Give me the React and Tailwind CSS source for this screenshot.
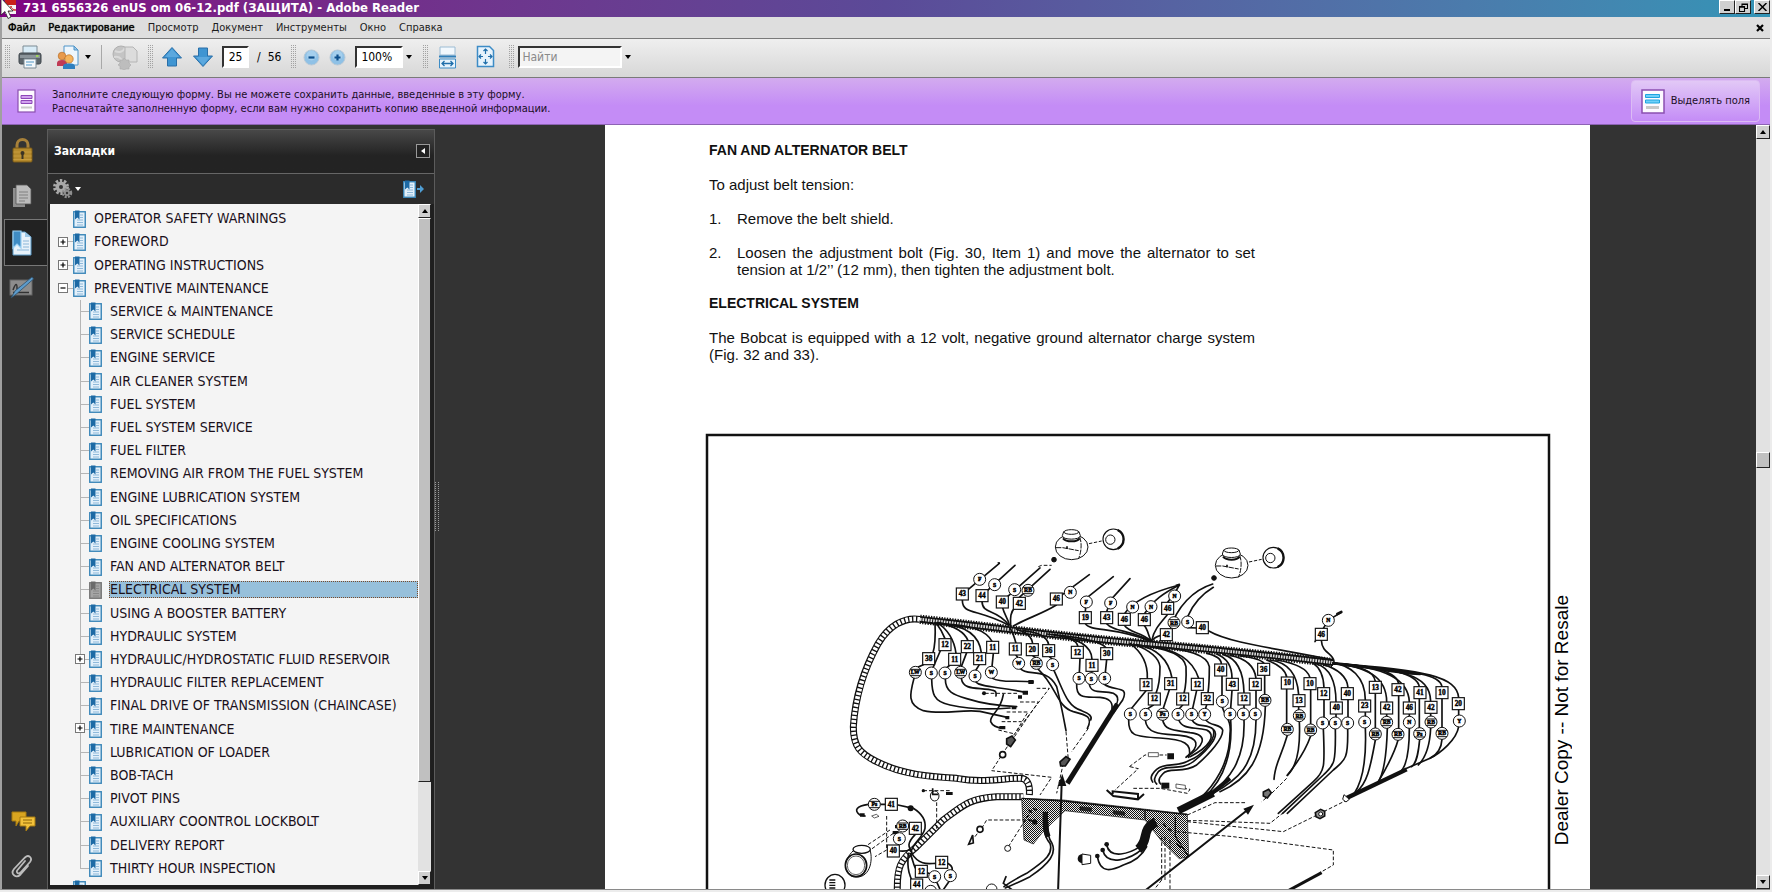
import React from "react";

const UI = "font-['DejaVu_Sans_Condensed','DejaVu_Sans',sans-serif]";

/* ---------- small shared pieces ---------- */

function Caret({ label, className = "" }) {
  return (
    <button aria-label={label} className={"flex h-6 w-3 items-center justify-center " + className}>
      <svg width="6" height="4" viewBox="0 0 6 4" aria-hidden="true">
        <path d="M0 0h6L3 4z" fill="currentColor" />
      </svg>
    </button>
  );
}

function Grip({ className = "" }) {
  return (
    <svg className={"shrink-0 " + className} width="5" height="24" viewBox="0 0 5 24" aria-hidden="true">
      <path d="M0.500 0v24M2.500 0v24M4.500 0v24" stroke="#a2a2a2" strokeWidth="1" strokeDasharray="1 1" />
    </svg>
  );
}

function ToolButton({ label, className = "", children }) {
  return (
    <button aria-label={label} className={"flex shrink-0 items-center justify-center " + className}>
      {children}
    </button>
  );
}

function BookmarkIcon({ gray = false }) {
  const edge = gray ? "#777" : "#3a86b8";
  const tab = gray ? "#6b6b6b" : "#1d6aa5";
  return (
    <svg className="shrink-0" width="13" height="18" viewBox="0 0 13 18" aria-hidden="true">
      <rect x="0.75" y="1.75" width="11.5" height="15.5" fill={gray ? "#a5a5a5" : "#e3f0fa"} stroke={edge} strokeWidth="1.4" />
      <path d="M7 5h3M7 7.500h3M4 10h6M4 12.500h6M4 15h6" stroke={gray ? "#888" : "#8fb9da"} strokeWidth="1" />
      <path d="M2 0.500h4.500v9L4.300 7.500 2 9.500z" fill={tab} />
    </svg>
  );
}

/* ---------- title bar, menu, toolbar ---------- */

function TitleBar() {
  const box = "flex h-[14px] w-4 items-center justify-center border border-t-white border-l-white border-r-[#222] border-b-[#222] bg-[#d0d0d0]";
  return (
    <header className="relative flex h-[17px] shrink-0 items-start bg-linear-to-r from-[#800080] via-[#5b4a98] to-[#3394b6] pl-1 text-white">
      <svg className="shrink-0" width="13" height="16" viewBox="0 0 13 16" aria-hidden="true">
        <path d="M1 0h11v14H1z" fill="#f4f4f4" />
        <path d="M1 0h11v5H1z" fill="#c8201c" />
        <path d="M3 12c3-1 4-4 4-6 0 2 2 4 5 4-4 0-7 1-9 2z" fill="none" stroke="#d8302a" strokeWidth="1" />
      </svg>
      <svg className="absolute top-0 left-0" width="14" height="20" viewBox="0 0 14 20" aria-hidden="true">
        <path d="M1-2v17l4-3.500 3 7 3-1.500-3-6h5z" fill="#fff" stroke="#222" strokeWidth="0.8" />
      </svg>
      <h1 className="ml-[6px] grow text-[13px] leading-[15px] font-bold">731 6556326 enUS om 06-12.pdf (ЗАЩИТА) - Adobe Reader</h1>
      <div className="flex">
        <button aria-label="Свернуть" className={box}>
          <svg width="8" height="8" viewBox="0 0 8 8"><path d="M1 6h6v2H1z" fill="#000" /></svg>
        </button>
        <button aria-label="Восстановить" className={box}>
          <svg width="9" height="9" viewBox="0 0 9 9">
            <path d="M3 3V1h5.500v4.500H6M0.500 3.500h5v5h-5zM3 1.500h5.500M0.500 4.200h5" fill="none" stroke="#000" strokeWidth="1.100" />
          </svg>
        </button>
        <button aria-label="Закрыть" className={box + " ml-[3px]"}>
          <svg width="9" height="8" viewBox="0 0 9 8"><path d="M0.500 0l8 8M8.500 0l-8 8" stroke="#000" strokeWidth="1.500" /></svg>
        </button>
      </div>
    </header>
  );
}

function MenuBar() {
  const items = ["Файл", "Редактирование", "Просмотр", "Документ", "Инструменты", "Окно", "Справка"];
  return (
    <nav aria-label="Меню" className="flex h-[22px] shrink-0 items-center gap-[13px] border-b border-[#7a7a7a] bg-[#dedede] pr-[6px] pl-[6px] text-[11px] leading-4 text-[#1c1c1c]">
      {items.map((t, i) => (
        <button key={t} className={i < 2 ? "text-black [text-shadow:0_0_1px_#000]" : ""}>{t}</button>
      ))}
      <button aria-label="Закрыть документ" className="ml-auto">
        <svg width="8" height="8" viewBox="0 0 8 8"><path d="M1 1l6 6M7 1L1 7" stroke="#000" strokeWidth="2.200" /></svg>
      </button>
    </nav>
  );
}

function ArrowIcon({ down = false }) {
  return (
    <svg width="22" height="22" viewBox="0 0 22 22" aria-hidden="true" className={down ? "rotate-180" : ""}>
      <path d="M11 1.500L20.500 12H15.500v8H6.500v-8H1.500z" fill="#3f95d2" stroke="#2a6fa8" strokeWidth="1" strokeLinejoin="round" />
      <path d="M11 3L18 11H4z" fill="#6fb6e6" opacity="0.600" />
    </svg>
  );
}

function ZoomIcon({ plus = false }) {
  return (
    <svg width="17" height="17" viewBox="0 0 17 17" aria-hidden="true">
      <circle cx="8.500" cy="8.500" r="7.500" fill="#8fc1e6" stroke="#b9c9d6" strokeWidth="1" />
      <circle cx="8.500" cy="6.500" r="5" fill="#aed4f0" opacity="0.700" />
      <path d={plus ? "M5.500 8.500h6M8.500 5.500v6" : "M5.500 8.500h6"} stroke="#0d4f8c" strokeWidth="2.200" />
    </svg>
  );
}

function Toolbar() {
  const field = "h-[22px] rounded-none border-2 border-t-[#333] border-l-[#333] border-r-white border-b-white text-[12px] text-black outline-none";
  return (
    <div className="flex h-[39px] shrink-0 items-center border-b border-[#7a7a7a] bg-linear-to-b from-[#efefef] to-[#d7d7d7] pb-[2px] pl-[3px] text-black">
      <Grip />
      <ToolButton label="Печать" className="ml-2">
        <svg width="24" height="24" viewBox="0 0 24 24" aria-hidden="true">
          <path d="M5 1h14v9H5z" fill="#d9ecf7" stroke="#7d8b94" />
          <rect x="1" y="8" width="22" height="11" rx="2" fill="#5c646a" stroke="#3f474d" />
          <path d="M2 10h20v3H2z" fill="#8b949a" />
          <rect x="18" y="10" width="2.500" height="2" fill="#9fd45a" />
          <path d="M6 14h12v9H6z" fill="#f4f8fb" stroke="#7d8b94" />
          <path d="M8 17h8M8 20h6" stroke="#86b6d8" strokeWidth="1.500" />
        </svg>
      </ToolButton>
      <ToolButton label="Совместная работа" className="ml-[14px]">
        <svg width="24" height="25" viewBox="0 0 24 25" aria-hidden="true">
          <path d="M8 1h10l4 4v15H8z" fill="#eef6fc" stroke="#4e94c8" />
          <path d="M18 1v4h4z" fill="#9cc8e8" stroke="#4e94c8" />
          <circle cx="6" cy="11" r="3.800" fill="#e89a4c" stroke="#b96f27" strokeWidth="0.700" />
          <path d="M1 21v-3c0-2 2-3 5-3s5 1 5 3v3z" fill="#c03a55" />
          <circle cx="13" cy="14" r="4.200" fill="#f5b45c" stroke="#b96f27" strokeWidth="0.700" />
          <path d="M7 24v-2.500c0-2.500 2.500-3 6-3s6 .5 6 3V24z" fill="#2d7fc0" />
        </svg>
      </ToolButton>
      <Caret label="Меню совместной работы" className="ml-[2px]" />
      <span className="ml-[7px] h-6 w-px bg-[#a8a8a8]" />
      <ToolButton label="Веб-инструменты" className="ml-[9px]">
        <svg width="27" height="25" viewBox="0 0 27 25" aria-hidden="true">
          <circle cx="10" cy="9" r="8" fill="#c4c4c4" stroke="#b0b0b0" />
          <path d="M4 6c4 2 8 1 10-3M3 12c4-1 7 1 8 4" stroke="#dadada" strokeWidth="2" fill="none" />
          <path d="M14 2h8l4 4v11H14z" fill="#dcdcdc" stroke="#b4b4b4" />
          <path d="M13 13l2 2h3v3l2 2-2 2v2h-3l-2 1-2-1H9v-3l-2-1 2-2v-3h3z" fill="#bdbdbd" stroke="#ababab" strokeWidth="0.600" />
        </svg>
      </ToolButton>
      <Grip className="ml-[10px]" />
      <ToolButton label="Предыдущая страница" className="ml-2"><ArrowIcon /></ToolButton>
      <ToolButton label="Следующая страница" className="ml-[9px]"><ArrowIcon down /></ToolButton>
      <input aria-label="Номер страницы" defaultValue="25" className={field + " ml-2 w-[27px] bg-white text-center"} />
      <span className="ml-2 flex gap-[7px] text-[12px]"><span>/</span><span>56</span></span>
      <Grip className="ml-[10px]" />
      <ToolButton label="Уменьшить" className="ml-[7px]"><ZoomIcon /></ToolButton>
      <ToolButton label="Увеличить" className="ml-[9px]"><ZoomIcon plus /></ToolButton>
      <input aria-label="Масштаб" defaultValue="100%" className={field + " ml-[9px] w-12 bg-white pl-[4px]"} />
      <Caret label="Выбрать масштаб" />
      <Grip className="ml-2" />
      <ToolButton label="По ширине" className="ml-[10px]">
        <svg width="19" height="23" viewBox="0 0 19 23" aria-hidden="true">
          <path d="M2 1h15v8H2z" fill="#f2f8fd" stroke="#9cbcd4" />
          <path d="M1 10.500h17" stroke="#2f7fba" strokeWidth="2" />
          <path d="M1.500 13h16v9h-16z" fill="#e7f3fc" stroke="#3d8cc6" />
          <path d="M4 17.500h11M6.500 15L4 17.500 6.500 20M12.500 15l2.500 2.500-2.500 2.500" fill="none" stroke="#1f6eaa" strokeWidth="1.300" />
        </svg>
      </ToolButton>
      <ToolButton label="Страница целиком" className="ml-[19px]">
        <svg width="19" height="24" viewBox="0 0 19 24" aria-hidden="true">
          <path d="M1.500 1.500h12l4 4v16h-16z" fill="#e7f3fc" stroke="#3d8cc6" strokeWidth="1.500" />
          <path d="M9.500 4v5M7.500 6l2-2 2 2M9.500 14v5M7.500 17l2 2 2-2M3 11.500h4M5 9.500l-2 2 2 2M12 11.500h4M14 9.500l2 2-2 2" fill="none" stroke="#1f6eaa" strokeWidth="1.200" />
        </svg>
      </ToolButton>
      <Grip className="ml-[14px]" />
      <input aria-label="Найти" placeholder="Найти" className={field + " ml-1 w-[104px] bg-[#f4f4f4] pl-[2px] placeholder:text-[#8a8a8a]"} />
      <Caret label="Параметры поиска" />
    </div>
  );
}

function MessageBar() {
  return (
    <section className="flex h-[47px] shrink-0 items-center border-b border-[#8d63b4] bg-linear-to-b from-[#d3abef] to-[#c48cf6] to-60% pr-[10px] pl-[15px] text-[#1b0f26]">
      <svg className="shrink-0" width="19" height="24" viewBox="0 0 19 24" aria-hidden="true">
        <rect x="1" y="1" width="17" height="22" fill="#fdfaff" stroke="#8a4fb0" strokeWidth="1.200" />
        <path d="M4 6.500h11v3H4zM4 11.500h11v3H4z" fill="#d0a0ee" stroke="#8d46b8" />
        <path d="M4 18.500h11" stroke="#c9c9c9" strokeWidth="2" />
      </svg>
      <p className="ml-4 pt-px text-[11px] leading-[14px]">
        Заполните следующую форму. Вы не можете сохранить данные, введенные в эту форму.
        <br />
        Распечатайте заполненную форму, если вам нужно сохранить копию введенной информации.
      </p>
      <button className="ml-auto flex h-[42px] items-center gap-[6px] rounded border border-[#dcbcf4] bg-linear-to-b from-[#e2c8f6] to-[#c48cf6] px-[9px] text-[11px] whitespace-nowrap">
        <svg width="24" height="25" viewBox="0 0 24 25" aria-hidden="true">
          <rect x="1" y="1" width="22" height="23" fill="#fdfaff" stroke="#8a4fb0" strokeWidth="1.500" />
          <path d="M4.500 5.500h14v3h-14zM4.500 11h14v3h-14z" fill="#6fd0f8" stroke="#1ea4e0" />
          <path d="M5 17h13v3H5z" fill="#c9c9c9" />
        </svg>
        Выделять поля
      </button>
    </section>
  );
}

/* ---------- navigation pane ---------- */

function NavStrip() {
  return (
    <nav aria-label="Панели" className="flex w-[45px] shrink-0 flex-col bg-[#333]">
      <button aria-label="Защита" className="ml-[9px] mt-3 h-[27px] w-[24px]">
        <svg width="24" height="27" viewBox="0 0 24 27" aria-hidden="true">
          <path d="M6 12V8a5.500 5.500 0 0 1 11 0v4" fill="none" stroke="#a8813a" strokeWidth="3" />
          <rect x="2" y="11" width="19" height="14" rx="1" fill="#b58a2c" stroke="#7b5b18" />
          <path d="M2.500 15h18M2.500 19h18M2.500 22.500h18" stroke="#c79c3e" strokeWidth="1" />
          <circle cx="11.500" cy="16" r="2" fill="#3b3324" /><path d="M10.500 16h2v6h-2z" fill="#3b3324" />
        </svg>
      </button>
      <button aria-label="Страницы" className="ml-[9px] mt-5 h-[24px] w-[24px]">
        <svg width="24" height="24" viewBox="0 0 24 24" aria-hidden="true">
          <path d="M2 4h12v19H2z" fill="#8e8e8e" />
          <path d="M5 1h11l4 4v15H5z" fill="#bcbcbc" stroke="#555" strokeWidth="0.800" />
          <path d="M8 8h9M8 11h9M8 14h9M8 17h6" stroke="#808080" />
        </svg>
      </button>
      <div className="mt-[11px] ml-[2px] flex h-[47px] items-center border-y border-l border-[#777] bg-[#222] pl-[6px]">
        <button aria-label="Закладки">
          <svg width="22" height="26" viewBox="0 0 22 26" aria-hidden="true">
            <path d="M2 2h12l6 5v18H2z" fill="#e8f2fa" stroke="#5a9bc9" />
            <path d="M14 2v5h6z" fill="#9cc7e6" />
            <path d="M12 11h6M12 14h6M12 17h6M6 20h12" stroke="#8ab6d8" />
            <path d="M2 1h8v17l-4-4-4 4z" fill="#3f8cc4" stroke="#9cd0f2" strokeWidth="1.200" />
          </svg>
        </button>
      </div>
      <button aria-label="Подписи" className="mt-[10px] ml-[7px] h-6 w-[26px]">
        <svg width="26" height="24" viewBox="0 0 26 24" aria-hidden="true">
          <rect x="1" y="4" width="22" height="15" fill="#8d8d8d" stroke="#666" />
          <path d="M4 14c3-8 4-6 4-2s2 0 3-1M4 16.500h16" stroke="#333" strokeWidth="1.500" fill="none" />
          <path d="M2 22l4-7L23 1l1.500 2L8 17.500z" fill="#5d9ccc" stroke="#2e516c" strokeWidth="0.800" />
        </svg>
      </button>
      <button aria-label="Комментарии" className="mt-auto ml-2 h-5 w-[26px]">
        <svg width="26" height="20" viewBox="0 0 26 20" aria-hidden="true">
          <path d="M2 1h14v9h-7l-3 5v-5H2z" fill="#d9a520" stroke="#a67a10" strokeLinejoin="round" />
          <path d="M10 6h15v9h-5l-4 5v-5h-6z" fill="#f2c13a" stroke="#a67a10" strokeLinejoin="round" />
          <path d="M13 9h9M13 12h9" stroke="#8c6408" />
        </svg>
      </button>
      <button aria-label="Вложения" className="mt-[22px] mb-[10px] ml-[8px] h-[26px] w-6">
        <svg width="24" height="26" viewBox="0 0 24 26" aria-hidden="true">
          <path d="M15 8L7.500 17c-2 2.500 1 4.500 3 2.500L20 9c3-4-1.500-8-5-4.500L4 16c-4 5 2 10 6.500 5.500L18 13" fill="none" stroke="#bdbdbd" strokeWidth="1.800" strokeLinecap="round" />
        </svg>
      </button>
    </nav>
  );
}

const roots = [
  { t: "OPERATOR SAFETY WARNINGS", x: "" },
  { t: "FOREWORD", x: "+" },
  { t: "OPERATING INSTRUCTIONS", x: "+" },
  { t: "PREVENTIVE MAINTENANCE", x: "-" },
];

const children = [
  "SERVICE & MAINTENANCE", "SERVICE SCHEDULE", "ENGINE SERVICE", "AIR CLEANER SYSTEM", "FUEL SYSTEM",
  "FUEL SYSTEM SERVICE", "FUEL FILTER", "REMOVING AIR FROM THE FUEL SYSTEM", "ENGINE LUBRICATION SYSTEM",
  "OIL SPECIFICATIONS", "ENGINE COOLING SYSTEM", "FAN AND ALTERNATOR BELT", "ELECTRICAL SYSTEM",
  "USING A BOOSTER BATTERY", "HYDRAULIC SYSTEM", "HYDRAULIC/HYDROSTATIC FLUID RESERVOIR",
  "HYDRAULIC FILTER REPLACEMENT", "FINAL DRIVE OF TRANSMISSION (CHAINCASE)", "TIRE MAINTENANCE",
  "LUBRICATION OF LOADER", "BOB-TACH", "PIVOT PINS", "AUXILIARY COONTROL LOCKBOLT", "DELIVERY REPORT",
  "THIRTY HOUR INSPECTION",
];
const expandable = ["HYDRAULIC/HYDROSTATIC FLUID RESERVOIR", "TIRE MAINTENANCE"];

function Expander({ minus = false, className = "" }) {
  return (
    <button aria-label={minus ? "Свернуть" : "Развернуть"} className={"h-[10px] w-[10px] " + className}>
      <svg className="block" width="10" height="10" viewBox="0 0 10 10">
        <rect x="0.500" y="0.500" width="9" height="9" fill="#fff" stroke="#777" />
        <path d={minus ? "M2.500 5h5" : "M2.500 5h5M5 2.500v5"} stroke="#000" strokeWidth="1.200" />
      </svg>
    </button>
  );
}

function ScrollButton({ up = false, label }) {
  return (
    <button aria-label={label} className="flex h-[14px] w-full shrink-0 items-center justify-center border border-t-white border-l-white border-r-[#222] border-b-[#222] bg-[#cfcfcf]">
      <svg width="6" height="4" viewBox="0 0 6 4"><path d={up ? "M0 4h6L3 0z" : "M0 0h6L3 4z"} fill="#000" /></svg>
    </button>
  );
}

const dither = "bg-[#e2e2e2]";
const thumb = "w-full shrink-0 border border-t-white border-l-white border-r-[#222] border-b-[#222] bg-[#c0c0c0]";

function BookmarksPanel() {
  return (
    <aside className="mt-1 flex w-[388px] shrink-0 flex-col border-x border-t border-[#5c5c5c] bg-[#1f1f1f]">
      <div className="flex h-[44px] shrink-0 items-center justify-between border-b border-[#666] bg-linear-to-b from-[#484848] to-[#232323] to-60% pr-1 pb-[2px] pl-[6px] text-white">
        <h2 className="text-[12px] font-bold">Закладки</h2>
        <button aria-label="Свернуть панель" className="flex h-[14px] w-[14px] items-center justify-center border border-[#999] bg-[#222]">
          <svg width="4" height="6" viewBox="0 0 4 6"><path d="M4 0v6L0 3z" fill="#fff" /></svg>
        </button>
      </div>
      <div className="flex h-[30px] shrink-0 items-center justify-between bg-[#2b2b2b] pr-[10px] pl-[5px] text-white">
        <div className="flex items-center">
          <svg width="20" height="20" viewBox="0 0 20 20" aria-hidden="true">
            <circle cx="8" cy="8" r="6.500" fill="none" stroke="#a8a8a8" strokeWidth="3" strokeDasharray="2.400 1.700" />
            <circle cx="8" cy="8" r="5.500" fill="#a8a8a8" />
            <circle cx="8" cy="8" r="2" fill="#333" />
            <circle cx="14" cy="14" r="4" fill="none" stroke="#8f8f8f" strokeWidth="2.500" strokeDasharray="2 1.200" />
            <circle cx="14" cy="14" r="3" fill="#8f8f8f" /><circle cx="14" cy="14" r="1.200" fill="#333" />
          </svg>
          <Caret label="Параметры" className="-ml-px" />
        </div>
        <button aria-label="Развернуть текущую закладку" className="flex items-center">
          <BookmarkIcon />
          <svg width="8" height="10" viewBox="0 0 8 10"><path d="M1 4h3V1l4 4-4 4V6H1z" fill="#4f9ed4" /></svg>
        </button>
      </div>
      <div className="mr-[3px] mb-1 ml-[2px] flex min-h-0 grow">
        <div className="flex min-w-0 grow flex-col overflow-hidden bg-[#f4f4f4] pt-[3px] text-[14px] leading-[17px] text-[#1a101a]">
          <ul className="flex min-h-0 grow flex-col">
            {roots.map((r) => (
              <li key={r.t} className="flex min-h-0 flex-1 items-center pl-2">
                {r.x ? <Expander minus={r.x === "-"} /> : <span className="w-[10px]" />}
                <span className={r.x ? "h-px w-[5px] bg-[#b5b5b5]" : "w-[5px]"} />
                <BookmarkIcon />
                <button className="ml-2 whitespace-nowrap">{r.t}</button>
              </li>
            ))}
            {children.map((t, i) => {
              const on = t === "ELECTRICAL SYSTEM";
              return (
                <li key={t} className="flex min-h-0 flex-1 items-center pl-[30px]">
                  <span className="relative flex w-[9px] shrink-0 flex-col self-stretch">
                    <span className="flex-1 border-b border-l border-[#b5b5b5]" />
                    <span className={"flex-1 " + (i < children.length - 1 ? "border-l border-[#b5b5b5]" : "")} />
                    {expandable.includes(t) && <Expander className="absolute top-[6px] -left-[5px]" />}
                  </span>
                  <BookmarkIcon gray={on} />
                  <button
                    className={
                      "ml-[7px] pl-px text-left whitespace-nowrap " +
                      (on ? "grow bg-[#97c0db] outline-1 -outline-offset-1 outline-dotted outline-[#7a4a2a]" : "")
                    }
                  >
                    {t}
                  </button>
                </li>
              );
            })}
          </ul>
          <div className="h-[5px] shrink-0 overflow-hidden pl-[23px]"><BookmarkIcon /></div>
        </div>
        <div className={"flex w-[13px] shrink-0 flex-col " + dither}>
          <ScrollButton up label="Вверх" />
          <div className={"grow-[563] " + thumb} />
          <div className="grow-[89]" />
          <ScrollButton label="Вниз" />
        </div>
      </div>
    </aside>
  );
}

/* ---------- wiring diagram ---------- */

function Tags({ boxes, circles }) {
  return (
    <g fontFamily="Liberation Serif, serif" fontWeight="bold" textAnchor="middle">
      {boxes.map(([x, y, t]) => (
        <g key={"b" + x + "-" + y}>
          <rect x={x - 18} y={y - 18} width="36" height="36" fill="#fff" stroke="#111" strokeWidth="3.500" />
          <text x={x} y={y + 7} fontSize="22" stroke="#000" strokeWidth="1.200">{t}</text>
        </g>
      ))}
      {circles.map(([x, y, t]) => (
        <g key={"c" + x + "-" + y}>
          <circle cx={x} cy={y} r="18" fill="#fff" stroke="#111" strokeWidth="3" />
          {t.length > 1 && <path d={`M${x - 15} ${y - 9}h30M${x - 15} ${y + 10}h30`} stroke="#111" strokeWidth="3" />}
          {t && <text x={x} y={y + 6} fontSize="17" stroke="#000" strokeWidth="1.500">{t}</text>}
        </g>
      ))}
    </g>
  );
}

const Rope = ({ d }) => (
  <g fill="none">
    <path d={d} stroke="#111" strokeWidth="21" />
    <path d={d} stroke="#fff" strokeWidth="14" strokeDasharray="8 4" />
  </g>
);

function Reservoir({ x, y }) {
  return (
    <g transform={`translate(${x} ${y})`} fill="#fff" stroke="#111" strokeWidth="3">
      <ellipse cx="0" cy="6" rx="49" ry="38" />
      <path d="M-47 8h20l48 9M24-24c8 20 4 50-4 66" fill="none" strokeDasharray="16 3" />
      <path d="M-28-28c0 14 54 14 54 0l-4-12h-46z" />
      <path d="M-26-20c10 12 42 12 50 0" fill="none" strokeWidth="6" />
      <ellipse cx="-1" cy="-39" rx="22" ry="7" />
      <path d="M-14 4v8" strokeWidth="5" />
      <path d="M52-4l38-8" strokeDasharray="10 5" />
      <circle cx="125" cy="-17" r="31" strokeWidth="3.500" />
      <circle cx="116" cy="-16" r="14" />
      <path d="M138-45A31 31 0 0 1 138 11" fill="none" strokeWidth="7" />
      <circle cx="-53" cy="44" r="7" fill="#111" />
    </g>
  );
}

const boxesMid = [
  [187, 282, "43"], [246, 287, "44"], [307, 306, "40"], [358, 310, "42"], [469, 297, "46"], [556, 353, "19"],
  [620, 353, "43"], [673, 358, "46"], [733, 359, "46"], [803, 325, "46"], [799, 404, "42"], [907, 383, "40"],
  [135, 434, "12"], [202, 440, "22"], [278, 442, "11"], [86, 476, "38"], [164, 478, "11"], [239, 476, "21"],
  [346, 447, "11"], [397, 449, "20"], [446, 452, "36"], [532, 457, "12"], [576, 496, "11"], [620, 461, "30"],
  [738, 554, "12"], [812, 551, "31"], [892, 553, "12"], [763, 597, "12"], [848, 597, "12"], [922, 596, "32"],
  [46, 985, "42"], [125, 1087, "12"], [64, 1114, "12"], [50, 1155, "44"], [-26, 913, "41"], [-20, 1053, "40"],
];
const circlesMid = [
  [239, 238, "F"], [284, 254, "S"], [344, 269, "S"], [384, 271, "RB"], [511, 277, "N"], [559, 306, "F"],
  [632, 309, "F"], [698, 321, "N"], [753, 320, "N"], [824, 288, "N"], [822, 368, "RB"], [863, 366, "S"],
  [46, 517, "LW"], [94, 519, "S"], [135, 519, "S"], [182, 517, "LW"], [225, 528, "S"], [274, 517, "W"],
  [356, 490, "W"], [409, 490, "RB"], [458, 494, "S"], [537, 535, "S"], [574, 536, "S"], [614, 535, "S"],
  [691, 642, "S"], [737, 643, "S"], [788, 643, "Ps"], [834, 643, "S"], [875, 643, "S"], [914, 643, "Y"],
  [104, 1130, "S"], [151, 1127, "S"], [92, 1174, ""], [-77, 913, "Ps"], [8, 978, "RB"], [-2, 1016, "S"],
];
const boxesRight = [
  [62, 450, "40"], [97, 493, "43"], [132, 537, "12"], [166, 493, "12"], [191, 448, "36"], [262, 489, "10"],
  [297, 542, "13"], [330, 491, "10"], [371, 521, "12"], [409, 564, "40"], [442, 521, "40"], [494, 558, "23"],
  [526, 502, "13"], [560, 564, "42"], [594, 509, "42"], [628, 564, "46"], [660, 518, "41"], [693, 562, "42"],
  [726, 518, "10"], [775, 551, "20"], [364, 343, "46"],
];
const circlesRight = [
  [67, 544, "S"], [90, 582, "S"], [130, 582, "S"], [166, 582, "S"], [195, 541, "RB"], [262, 628, "RB"],
  [298, 587, "RB"], [332, 630, "RB"], [368, 609, "S"], [406, 609, "S"], [443, 609, "S"], [494, 606, "S"],
  [526, 642, "RB"], [560, 607, "RB"], [594, 643, "RB"], [628, 607, "N"], [659, 641, "Ps"], [693, 606, "RB"],
  [726, 640, "RB"], [778, 603, "Y"], [385, 301, "N"],
];

const wiresMid = [
  /* leads above the harness */
  "M187 300C187 345 230 325 325 375", "M246 305C248 345 290 325 326 375", "M307 320C315 350 322 350 328 375",
  "M345 322C328 340 332 360 332 380", "M469 315C430 340 380 355 340 378", "M205 268L298 190", "M262 272L345 196",
  "M320 292L420 204", "M358 292L450 208", "M484 286L568 224", "M559 290L556 335M565 290L640 230",
  "M620 335L632 300 690 236", "M673 342C700 300 760 275 838 255", "M733 342C760 300 790 280 838 255",
  "M803 307L824 280 838 255", "M810 390C830 320 880 270 938 252", "M863 350C880 310 910 280 940 262",
  "M556 371C570 395 640 380 748 422", "M620 371C640 395 690 390 750 422", "M673 376C690 400 720 395 752 422",
  "M733 377C745 390 745 410 754 422", "M803 343C785 365 760 390 756 420", "M799 404C780 405 765 412 758 420",
  "M863 383L890 384M925 392C990 430 1130 445 1300 480",
  /* drops from the harness */
  "M105 368Q108 430 98 462M70 494L46 505", "M108 368Q125 390 135 416M122 450L98 505", "M112 368Q160 400 168 460M150 495L138 505",
  "M116 368Q190 385 204 422M200 458L184 500", "M122 370Q235 380 244 458M238 494L228 510", "M130 372Q250 375 276 424M280 460L276 500",
  "M330 385Q340 400 348 430M348 465L354 474", "M350 388Q395 400 398 432M398 467L408 474", "M370 392Q440 400 446 434M448 470L458 478",
  "M440 402Q530 410 534 440M540 475L538 518", "M460 404Q575 420 576 478M576 514L574 520", "M480 406Q600 420 618 443M620 479L616 518",
  "M690 430Q745 470 742 536M738 572L695 625", "M700 432Q775 460 780 500 780 550 768 580M760 615L740 628",
  "M710 434Q800 450 816 534M808 569L790 625", "M720 436Q850 450 858 500 860 550 852 580M848 615L836 628",
  "M740 438Q870 450 896 535M890 571L878 625", "M760 440Q920 450 928 500 928 550 924 578M920 614L916 628",
  /* below the tags */
  "M42 535C30 580 20 615 70 632C130 645 180 628 240 634L322 652", "M95 537C96 580 100 605 150 615C210 628 260 630 330 624",
  "M136 537C136 575 160 585 200 596C250 612 300 618 350 620", "M184 535C190 575 240 560 282 572Q290 574 288 588",
  "M228 546C240 562 300 560 380 578", "M278 535C300 550 350 540 400 546", "M310 584C300 640 270 640 272 665Q280 684 310 684",
  "M362 506C380 530 440 500 470 560C485 620 490 650 498 692", "M415 508C470 560 470 620 520 635C560 645 580 650 562 685",
  "M462 512C490 570 500 620 545 632Q580 645 572 660", "M530 552C528 600 560 590 600 592Q640 596 636 625",
  "M568 552C572 585 610 570 640 580Q660 590 650 612", "M612 552C640 575 690 555 668 600L640 640",
  "M686 660C685 705 700 710 780 714C850 718 880 730 866 772", "M736 660C740 705 790 702 840 706C900 712 900 740 860 770",
  "M788 660C795 695 830 690 870 698C930 705 910 740 858 772", "M836 660C850 690 880 680 920 690C950 705 930 740 870 770",
  "M876 660C890 685 920 670 940 688C960 705 930 745 880 785C840 815 800 790 775 815Q755 840 770 852",
  "M916 658C930 680 960 670 968 690C970 715 930 760 890 795C850 822 805 800 788 822Q770 840 782 852",
  "M940 690C950 720 900 770 870 780C830 805 800 785 770 808Q745 830 758 846",
  /* lower left */
  "M-44 913H-60M-6 915L40 925Q80 950 75 985C70 1010 40 1030 35 1050", "M-95 913C-130 918 -140 930 -120 945L-105 948",
  "M46 1003C20 1030 25 1040 35 1055M35 1060C60 1100 90 1090 108 1090M30 1060C40 1080 40 1100 50 1110M25 1060C20 1110 30 1130 40 1150",
  "M143 1090Q160 1100 156 1112M82 1118L92 1122M110 1146L122 1172M146 1146L128 1172M0 1053Q20 1055 30 1048",
  /* cables hanging from the bracket */
  "M432 940C430 980 432 1010 450 1030C460 1060 440 1080 380 1120Q340 1140 312 1160",
  "M440 940C445 980 440 1010 456 1030C470 1060 450 1090 390 1130Q350 1150 316 1164", "M318 1130L310 1150 340 1172",
  "M620 1035C630 1080 690 1060 720 1040", "M608 1050C620 1100 690 1080 728 1046", "M592 1068C600 1125 640 1110 670 1095Q720 1080 740 1040",
];

const dashMid = [
  "M410 565H448L330 720M360 606H415L340 715M320 636H384L345 700M305 665H365M295 690L345 702M322 740L275 812 455 832 420 885",
  "M498 695L505 780M565 685L515 755M490 790L470 880", "M255 580H355", "M415 200L425 196H455", "M688 800L735 765H800M690 800L715 806 645 870",
  "M700 865H780L862 880 870 868 830 862", "M245 985L260 960H400M325 1040L395 930M325 1040M225 1010L240 990",
  "M70 872H155M110 890V990", "M-40 948V1050L-75 1070M-30 990L-120 1050M-20 1000L-110 1065", "M862 945L945 908H1040M862 962H900L1110 970 1160 930M862 965L1150 995 1245 948 1345 898",
  "M830 995L1000 1010 1300 1050V1095L1260 1118", "M785 1010V1140M795 1010V1140M810 1020V1172M785 1140L760 1172", "M1160 835L1115 880 1085 905",
];

const wiresRight = [
  "M345 365L385 301 422 278M364 361C366 400 400 400 402 424", "M20 400Q64 410 64 432M66 468V528", "M50 402Q96 420 96 475M96 511L92 566",
  "M70 404Q130 420 132 519V566", "M90 406Q162 420 168 475M168 511V566", "M120 408Q180 415 192 430M194 466V525",
  "M200 420Q255 440 260 471M260 507V612", "M210 420Q290 430 296 524V570", "M230 420Q320 435 330 473M332 509V614",
  "M340 430Q370 450 372 503V592", "M350 432Q408 450 408 546V592", "M370 434Q440 455 444 503V592",
  "M400 430C450 435 496 470 496 540V590", "M400 430C480 440 520 450 526 484V624", "M400 430C500 440 560 470 560 546V590",
  "M400 430C530 440 590 455 596 491V625", "M400 430C560 440 626 480 628 546V590", "M400 430C580 445 650 460 658 500V624",
  "M400 430C600 450 690 460 692 544V590", "M400 430C640 455 720 460 726 500V622", "M400 430C680 450 770 470 776 533V586",
  "M67 562C75 590 95 600 90 640C90 730 40 800 0 835", "M92 600C100 720 60 790 10 835", "M132 600C136 720 90 780 20 830",
  "M168 600C168 740 110 780 40 820", "M196 559C192 720 140 780 60 815", "M262 646C240 720 225 730 222 778",
  "M298 605C302 690 290 740 262 766", "M332 648C310 710 280 740 262 766", "M370 627C375 740 375 755 340 785L235 880",
  "M406 627C408 740 400 735 370 765L248 880", "M443 627C445 720 435 720 400 750L262 880", "M496 624C500 720 490 780 462 822",
  "M526 660C510 750 500 790 470 815", "M562 625C560 700 550 770 530 792", "M594 661C580 710 550 760 535 785",
  "M628 625C628 700 620 740 600 756", "M659 659C655 700 650 730 635 740", "M692 624C690 670 680 710 655 735",
  "M726 658C724 690 710 705 690 715", "M776 620C770 660 720 700 690 715L620 745",
];

function WiringDiagram() {
  const loop = "M60 358C10 350 -35 380 -65 430C-110 510 -135 600 -140 680C-140 740 -120 760 -70 785C10 825 90 830 170 835C250 850 300 835 360 835Q392 835 388 885";
  const low = "M370 890H290C210 895 190 915 130 960L50 1040C0 1080 -10 1100 -8 1180";
  const main = "M60 358C200 372 500 412 700 428S1150 470 1300 488";
  return (
    <svg className="block w-full" viewBox="605 430 985 460" role="img" aria-label="Wiring diagram">
      <defs>
        <pattern id="halftone" width="6" height="6" patternUnits="userSpaceOnUse">
          <rect width="6" height="6" fill="#eee" />
          <path d="M0 0h3v3H0zM3 3h3v3H3z" fill="#111" />
        </pattern>
      </defs>
      <path d="M707 900V435H1549V900" fill="none" stroke="#111" strokeWidth="2.500" />
      <g transform="translate(900 500) scale(0.33333)">
        <Rope d={loop} />
        <Rope d={low} />
        <g fill="none">
          <path d={main} stroke="#111" strokeWidth="28" strokeDasharray="4 4" />
          <path d={main} stroke="#111" strokeWidth="20" />
          <path d={main} stroke="#ddd" strokeWidth="9" strokeDasharray="5 3" />
        </g>
        <g stroke="#111" strokeWidth="2">
          <path d="M365 895L490 900 862 942 866 1070 838 1076 790 1030 735 960 495 932 460 965 425 1000 400 1032 372 1020z" fill="url(#halftone)" />
          <path d="M540 920l34 4v10l-34-4zM640 932l34 4v10l-34-4z" fill="#222" />
          <path d="M365 895L490 903 862 944M826 950V1010L866 1070M735 930V958" fill="none" strokeWidth="4" />
          <path d="M385 930l10 8M400 925l10 6M385 960l12 4M790 970l8 10M804 985l10 8M830 1030l12 14" fill="none" strokeWidth="5" />
        </g>
        <g fill="none" stroke="#111" strokeWidth="5" strokeLinecap="round">
          {wiresMid.map((d) => <path key={d} d={d} />)}
        </g>
        <g fill="none" stroke="#111" strokeWidth="3" strokeDasharray="11 6">
          {dashMid.map((d) => <path key={d} d={d} />)}
        </g>
        <g fill="none" stroke="#111">
          <path d="M652 612L502 850" strokeWidth="15" />
          <path d="M768 966C720 990 750 1020 715 1048" strokeWidth="28" />
          <path d="M436 935C436 970 434 985 444 1010" strokeWidth="16" />
          <path d="M474 1180L485 850M735 1172L1050 924" strokeWidth="6" />
          <path d="M835 932L940 880" strokeWidth="22" />
          <path d="M925 888L990 835" strokeWidth="12" />
          <path d="M1340 894L1520 808" strokeWidth="13" />
          <path d="M1150 1180L1265 1118" strokeWidth="9" />
        </g>
        <g fill="#111">
          <path d="M487 822l12 36h-26zM1062 914l-18 30-14-18z" />
          <path d="M292 187l8-1-4 8zM840 250l-14 4 6 8z" />
          <circle cx="32" cy="925" r="9" />
          <circle cx="404" cy="966" r="8" /><circle cx="252" cy="580" r="6" />
          <circle cx="620" cy="1033" r="7" /><circle cx="608" cy="1050" r="7" /><circle cx="592" cy="1068" r="7" />
          <circle cx="546" cy="1076" r="13" />
          <path d="M385 540h16v12h-16zM368 572h16v12h-16zM354 586h12v10h-12zM335 618h14v10h-14zM316 648h12v10h-12zM298 678h18v10h-18zM802 760h20v18h-20z" />
          <path d="M784 848h24v18h-24z" />
          <circle cx="70" cy="872" r="5" /><path d="M138 876h20v9h-20zM-120 940h14v10h-14zM-15 975h12v10h-12zM-22 993h18v10h-18z" />
        </g>
        <g fill="#fff" stroke="#111" strokeWidth="5">
          <path d="M320 716l16-8 10 12-14 20-12-8z" fill="#555" />
          <path d="M480 786l18-16 12 8-14 20h-14z" fill="#555" />
          <path d="M1090 876l16-8 8 10-12 16-12-6z" fill="#777" />
          <circle cx="308" cy="764" r="9" /><circle cx="240" cy="988" r="9" /><circle cx="323" cy="1045" r="9" strokeWidth="3" />
          <path d="M218 1005l-12 28 14-4z" />
          <ellipse cx="104" cy="888" rx="13" ry="15" strokeWidth="3" /><path d="M98 865v18h16" fill="none" />
          <path d="M546 1062l26 4v24l-26 4z" strokeWidth="3" />
          <path d="M745 758h30v12h-30zM828 852l28 4v12l-28-4z" strokeWidth="2" />
          <path d="M620 870l20 18 74 10 18-16M638 882v-8l76 8v14" fill="none" strokeWidth="6" />
          <path d="M-140 1052C-170 1080 -170 1120 -140 1130C-90 1140 -80 1080 -90 1050z" strokeWidth="3" />
          <ellipse cx="-115" cy="1048" rx="26" ry="12" strokeWidth="4" />
          <ellipse cx="-132" cy="1096" rx="32" ry="34" />
          <ellipse cx="-132" cy="1096" rx="26" ry="28" strokeWidth="2" />
          <ellipse cx="-195" cy="1155" rx="30" ry="32" strokeWidth="4" />
          <path d="M-212 1140h18M-212 1148h18M-212 1156h18M-212 1164h18" strokeWidth="4" />
          <path d="M-85 948l14-5 8 6-14 5z" strokeWidth="2" />
          <circle cx="275" cy="1168" r="16" strokeWidth="3" />
          <path d="M1332 884l16 14-10 8-10-8z" strokeWidth="3" />
          <path d="M1246 938l16-10 12 6v14l-14 8-12-6z" fill="#999" /><circle cx="1262" cy="942" r="6" strokeWidth="3" />
        </g>
        <Reservoir x={515} y={135} />
        <Reservoir x={995} y={190} />
        <g transform="translate(900 60)" fill="none" stroke="#111" strokeWidth="5" strokeLinecap="round">
          {wiresRight.map((d) => <path key={d} d={d} />)}
          <path d="M412 282l12-6" strokeWidth="8" />
          <path d="M400 430C500 438 560 455 660 462" strokeWidth="8" />
        </g>
        <Tags boxes={boxesMid} circles={circlesMid} />
        <g transform="translate(900 60)"><Tags boxes={boxesRight} circles={circlesRight} /></g>
      </g>
    </svg>
  );
}

function PdfPage() {
  return (
    <article className="relative flex w-[985px] shrink-0 flex-col overflow-hidden bg-white font-['Liberation_Sans',Arial,sans-serif] text-[#111]">
      <div className="ml-[104px] w-[546px] pt-[17px] text-[15px] leading-[17px]">
        <h3 className="text-[14px] font-bold">FAN AND ALTERNATOR BELT</h3>
        <p className="mt-[17px]">To adjust belt tension:</p>
        <ol className="mt-[17px] flex flex-col gap-[17px]">
          <li className="flex"><span className="w-7 shrink-0">1.</span><span>Remove the belt shield.</span></li>
          <li className="flex">
            <span className="w-7 shrink-0">2.</span>
            <span className="text-justify">
              Loosen the adjustment bolt (Fig. 30, Item 1) and move the alternator to set tension at 1/2’’ (12 mm), then tighten the adjustment bolt.
            </span>
          </li>
        </ol>
        <h3 className="mt-[17px] text-[14px] font-bold">ELECTRICAL SYSTEM</h3>
        <p className="mt-[17px] text-justify">
          The Bobcat is equipped with a 12 volt, negative ground alternator charge system (Fig.{"\u00a0"}32 and 33).
        </p>
      </div>
      <div className="mt-[67px]"><WiringDiagram /></div>
      <p className="absolute right-[16px] bottom-[44px] rotate-180 text-[19px] leading-6 whitespace-nowrap text-black [writing-mode:vertical-rl]">
        Dealer Copy -- Not for Resale
      </p>
    </article>
  );
}

function Viewer() {
  return (
    <main className="flex min-w-0 grow overflow-hidden bg-[#333]">
      <div className="flex w-1 shrink-0 items-center">
        <svg width="4" height="50" viewBox="0 0 4 50" aria-hidden="true">
          <path d="M0.500 0v50M3.500 0v50" stroke="#999" strokeDasharray="1 1" />
        </svg>
      </div>
      <div className="flex min-w-0 grow justify-center overflow-hidden"><PdfPage /></div>
      <div className={"flex w-[14px] shrink-0 flex-col " + dither}>
        <ScrollButton up label="Вверх" />
        <div className="grow-[313]" />
        <div className={"h-4 " + thumb} />
        <div className="grow-[408]" />
        <ScrollButton label="Вниз" />
      </div>
    </main>
  );
}

export default function App() {
  return (
    <div className={"flex h-screen w-full flex-col overflow-hidden border-r-2 border-b-2 border-[#ececec] bg-[#333] " + UI}>
      <TitleBar />
      <div className="flex min-h-0 grow flex-col border-b border-l-2 border-b-[#8a8a8a] border-l-[#a0a0a0]">
        <MenuBar />
        <Toolbar />
        <MessageBar />
        <div className="flex min-h-0 grow">
          <NavStrip />
          <BookmarksPanel />
          <Viewer />
        </div>
      </div>
    </div>
  );
}
